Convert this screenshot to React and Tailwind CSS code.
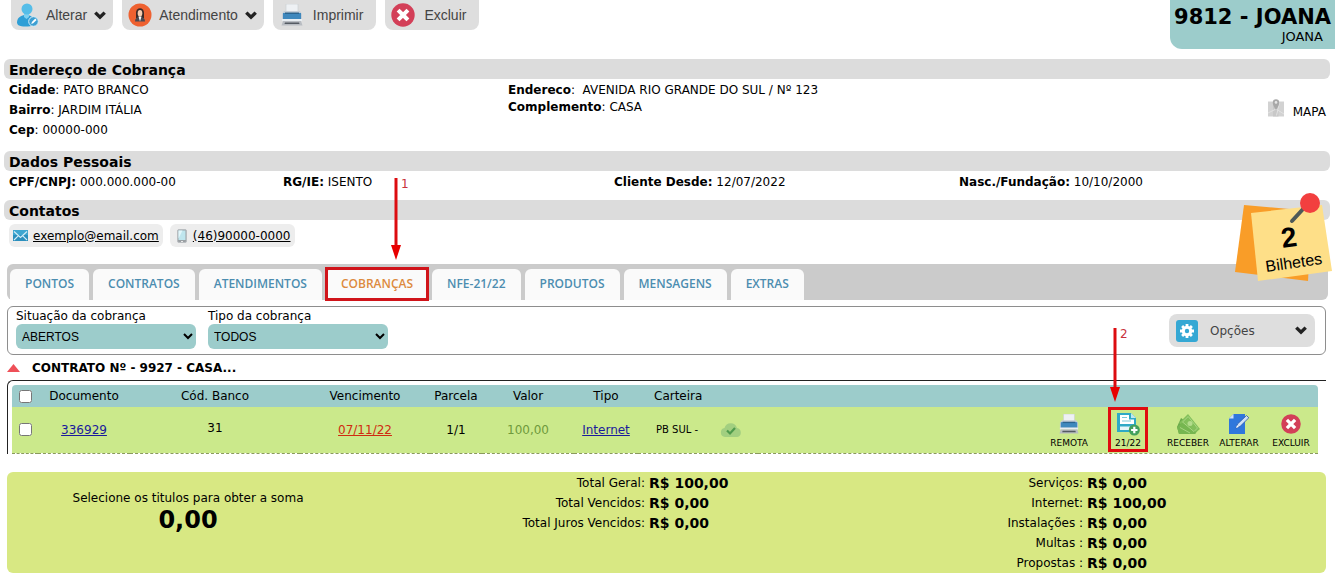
import { useState } from "react";

const tabs = ["PONTOS", "CONTRATOS", "ATENDIMENTOS", "COBRANÇAS", "NFE-21/22", "PRODUTOS", "MENSAGENS", "EXTRAS"];

const totals = [
    { label: "Total Geral:", value: "R$ 100,00" },
    { label: "Total Vencidos:", value: "R$ 0,00" },
    { label: "Total Juros Vencidos:", value: "R$ 0,00" },
];

const services = [
    { label: "Serviços:", value: "R$ 0,00" },
    { label: "Internet:", value: "R$ 100,00" },
    { label: "Instalações :", value: "R$ 0,00" },
    { label: "Multas :", value: "R$ 0,00" },
    { label: "Propostas :", value: "R$ 0,00" },
];

function Chevron() {
    return (
        <svg viewBox="0 0 12 9" className="w-3 h-[9px] shrink-0" fill="none" stroke="#222" strokeWidth="3.4">
            <path d="M1.3 1.6 6 6.2l4.700-4.600" />
        </svg>
    );
}

function UserIcon() {
    return (
        <svg viewBox="0 0 22 24" className="w-[22px] h-6 shrink-0">
            <path d="M0 20c0-5 3-7 7-8h4c4 1 7 3 7 8l-1 2c-5 2-12 2-16 0z" fill="#2f9fd6" />
            <path d="M7 10h5v4l-2.500 2L7 14z" fill="#7fd0f0" />
            <circle cx="10" cy="6" r="5.500" fill="#55bde8" />
            <circle cx="16.500" cy="18.500" r="4.800" fill="#3c9fd2" stroke="#d9eef8" strokeWidth="1" />
            <path d="m14.300 21 .6-2 3.400-3.400 1.300 1.300-3.400 3.400z" fill="#fff" />
        </svg>
    );
}

function AgentIcon() {
    return (
        <svg viewBox="0 0 24 24" className="w-6 h-6 shrink-0">
            <circle cx="12" cy="12" r="11.500" fill="#ee6130" />
            <path d="M8 15V9.500a4 4.300 0 0 1 8 0V15z" fill="#3a2a28" />
            <path d="M7 18.500c0-3 2-4 3.500-4.500h3c1.500.5 3.500 1.500 3.500 4.500z" fill="#4a4a52" />
            <ellipse cx="12" cy="10.300" rx="2.300" ry="3.200" fill="#f6cdb0" />
            <path d="m10.500 13.500 1.500 5 1.500-5z" fill="#fff" />
        </svg>
    );
}

function PrinterIcon({ className }) {
    return (
        <svg viewBox="0 0 22 22" className={className}>
            <path d="M5 0h12v9H5z" fill="#eef1f4" stroke="#c8cdd2" strokeWidth=".6" />
            <path d="M3 7h16l2 3v7H1v-7z" fill="#c5cdd6" />
            <path d="M2 9h18v6H2z" fill="#3f88bd" />
            <path d="M4 8.500h14V10H4z" fill="#2c648f" />
            <path d="M1 15h20v2H1z" fill="#e9eef2" />
            <path d="M2 17h18l1.500 4.500H.5z" fill="#b8bcc2" />
            <path d="M4 18.500h14l.5 1.500h-15z" fill="#555b63" />
        </svg>
    );
}

function DeleteIcon({ className }) {
    return (
        <svg viewBox="0 0 24 24" className={className}>
            <circle cx="12" cy="12" r="11.700" fill="#d33f58" />
            <path d="m8.500 8.500 7 7m0-7-7 7" stroke="#fff" strokeWidth="4" strokeLinecap="square" />
        </svg>
    );
}

function MapIcon() {
    return (
        <svg viewBox="0 0 18 20" className="w-[18px] h-5">
            <path d="M1 3.500h16v15H1z" fill="#d2d2d2" />
            <path d="M6 3.500h5.500v15H6z" fill="#c8c8c8" />
            <path d="m1 15 8-4 8 5M12.500 4.500l-3 13" stroke="#e2e2e2" fill="none" />
            <path d="M9 12C6.500 8 5.800 6.500 5.800 4.500a3.200 3.200 0 0 1 6.400 0C12.200 6.500 11.500 8 9 12z" fill="#a8a8a8" />
            <circle cx="9" cy="4.400" r="1.300" fill="#e6e6e6" />
        </svg>
    );
}

function MailIcon() {
    return (
        <svg viewBox="0 0 15 11" className="w-[15px] h-[11px]">
            <path d="M0 0h15v11H0z" fill="#2b8fbd" />
            <path d="M0 0h15v5H0z" fill="#3ea6d0" />
            <path d="m1 1.500 6.500 6 6.500-6M1 10l4.500-4.300M14 10 9.500 5.700" stroke="#d5eef8" strokeWidth="1.100" fill="none" />
        </svg>
    );
}

function PhoneIcon() {
    return (
        <svg viewBox="0 0 10 14" className="w-[10px] h-[14px]">
            <rect x=".5" y=".5" width="9" height="13" rx="1.500" fill="#9a9fa3" stroke="#b9bdc0" />
            <path d="M1.500 1.500h7v9.500h-7z" fill="#bfe6ee" />
            <path d="M1.500 1.500h4l-4 8z" fill="#e3f6fa" />
            <path d="M4 12h2v1H4z" fill="#e8e8e8" />
        </svg>
    );
}

function GearIcon() {
    return (
        <svg viewBox="0 0 22 22" className="w-[22px] h-[22px] shrink-0">
            <rect width="22" height="22" rx="3" fill="#35a8d4" />
            <circle cx="11" cy="11" r="3.700" fill="none" stroke="#fff" strokeWidth="3" />
            <path
                d="M11 4v3M11 15v3M4 11h3M15 11h3M6.100 6.100 8 8M14 14l1.900 1.900M15.900 6.100 14 8M8 14l-1.900 1.900"
                stroke="#fff"
                strokeWidth="2.800"
            />
        </svg>
    );
}

function CloudIcon() {
    return (
        <svg viewBox="0 0 22 16" className="w-[22px] h-4">
            <path d="M5 15a4.500 4.500 0 0 1-.5-8.900A6.500 6.500 0 0 1 17 6a4.600 4.600 0 0 1 .3 9z" fill="#a2cf80" />
            <path d="m7 8.500 3 3 5-5.500" stroke="#4f9a4c" strokeWidth="2.200" fill="none" />
        </svg>
    );
}

function InvoiceIcon() {
    return (
        <svg viewBox="0 0 24 24" className="w-6 h-6">
            <path d="M1 1h14l5 5v14H1z" fill="#2fa9c6" />
            <path d="M4 3h9v4.500h5V12H4z" fill="#fff" />
            <path d="M4 14.500h10V18H4z" fill="#e6f6f9" />
            <path d="M6 5.500h5M6 9h9" stroke="#7cc8d8" strokeWidth="1.200" />
            <path d="M15 1v5h5z" fill="#bfe8ef" />
            <circle cx="18.300" cy="18" r="5.500" fill="#43a05c" />
            <path d="M18.300 14.800v6.400M15.100 18h6.400" stroke="#fff" strokeWidth="2.200" />
        </svg>
    );
}

function MoneyIcon() {
    return (
        <svg viewBox="0 0 25 22" className="w-[25px] h-[22px]">
            <path d="M1 14 5 5l17 12-3 4H3z" fill="#69a84a" />
            <path d="m3 10 9-9 12 15-6 5z" fill="#82bf5a" />
            <path d="m1 14 6-5 13 10-1 2H3z" fill="#76b650" />
            <path d="m6.500 9 5.700-5.500L21.500 15 18 18.500z" fill="none" stroke="#a9d783" />
            <circle cx="14" cy="10.500" r="2.500" fill="#b3dc8c" />
            <path d="m4 14.500 10 5.500" stroke="#a6d480" />
        </svg>
    );
}

function EditIcon() {
    return (
        <svg viewBox="0 0 22 22" className="w-[22px] h-[22px]">
            <path d="M1 5.500 5.500 1H17v20H1z" fill="#2f77dc" />
            <path d="M1 5.500 5.500 1v4.500z" fill="#cfe2fa" />
            <path d="m8 15 1.500-4L18.500 2.500l2.300 2.300L12 13.500z" fill="#cfe0f5" stroke="#2456a8" strokeWidth=".8" />
            <path d="m8 15 1-2.700 1.700 1.600z" fill="#fff" />
        </svg>
    );
}

// Red guide arrow with its step number
function StepArrow({ step, length, className }) {
    return (
        <span className={`absolute flex items-start text-[#c8323c] font-normal text-xs leading-3 pointer-events-none ${className}`}>
            <svg viewBox={`0 0 10 ${length}`} width="10" height={length} className="shrink-0">
                <path d={`M5 0v${length - 12}`} stroke="#dc0c10" strokeWidth="3" />
                <path d={`M0 ${length - 15}h10L5 ${length}z`} fill="#e80000" />
            </svg>
            <span className="font-['DejaVu_Sans',sans-serif]">{step}</span>
        </span>
    );
}

function StickyNote() {
    return (
        <svg viewBox="0 0 98 90" className="absolute -right-[3px] -top-2 w-[98px] h-[90px] font-['Liberation_Sans',Arial,sans-serif]">
            <path d="m9 13 68 6-4 70-73-9z" fill="#f99d28" />
            <path d="m16 21 71-8 10 66-74 10z" fill="#fedf88" />
            <path d="m57 29 12-13" stroke="#4e5a58" strokeWidth="4" strokeLinecap="round" />
            <circle cx="75" cy="11" r="10" fill="#f23f3f" />
            <text x="54" y="55" textAnchor="middle" fontSize="28" fontWeight="bold" transform="rotate(-8 54 46)">2</text>
            <text x="59" y="76" textAnchor="middle" fontSize="16" transform="rotate(-8 59 72)">Bilhetes</text>
        </svg>
    );
}

function ToolButton({ icon, label, menu, className }) {
    return (
        <button className={`flex items-center h-[30px] rounded-b-lg bg-[#dedede] font-['Liberation_Sans',Arial,sans-serif] text-sm text-[#444] ${className}`}>
            {icon}
            <span>{label}</span>
            {menu && <Chevron />}
        </button>
    );
}

function SectionTitle({ children }) {
    return <h2 className="h-5 rounded-md bg-[#dcdcdc] px-[5px] text-sm leading-[22px] font-bold">{children}</h2>;
}

function Info({ label, children }) {
    return (
        <p>
            <b>{label}</b>
            {children}
        </p>
    );
}

function Action({ icon, label, className = "" }) {
    return (
        <button className={`flex flex-col items-center pt-[2px] text-[9px] leading-[14px] ${className}`}>
            <span className="flex h-6 items-center">{icon}</span>
            {label}
        </button>
    );
}

function SumTable({ rows, className }) {
    return (
        <dl className={`grid basis-0 content-start gap-x-1 leading-5 pt-px ${className}`}>
            {rows.map((r) => (
                <div key={r.label} className="contents">
                    <dt className="text-right">{r.label}</dt>
                    <dd className="text-sm leading-5 font-bold">{r.value}</dd>
                </div>
            ))}
        </dl>
    );
}

export default function App() {
    const [active, setActive] = useState("COBRANÇAS");
    const [all, setAll] = useState(false);

    return (
        <div className="bg-white text-black text-xs font-['DejaVu_Sans',Verdana,sans-serif]">
            <header className="flex items-start justify-between">
                <div className="flex gap-[9px] pl-[11px]">
                    <ToolButton icon={<UserIcon />} label="Alterar" menu className="gap-[7px] pl-[6px] pr-[7px]" />
                    <ToolButton icon={<AgentIcon />} label="Atendimento" menu className="gap-[7px] pl-[6px] pr-[7px]" />
                    <ToolButton icon={<PrinterIcon className="w-[22px] h-[22px]" />} label="Imprimir" className="gap-[10px] pl-2 pr-[13px]" />
                    <ToolButton icon={<DeleteIcon className="w-6 h-6" />} label="Excluir" className="gap-[9px] pl-[6px] pr-[13px]" />
                </div>
                <div className="h-[49px] rounded-bl-xl bg-[#9ccccb] pt-[5px] pl-1 pr-1 text-right">
                    <h1 className="text-[21px] leading-6 font-bold">9812 - JOANA</h1>
                    <p className="pr-2 text-[13px] leading-4">JOANA</p>
                </div>
            </header>

            <section className="mt-[10px] ml-1 mr-[5px]">
                <SectionTitle>Endereço de Cobrança</SectionTitle>
                <div className="flex pl-[5px] pt-px pb-[11px]">
                    <div className="w-[499px] leading-5">
                        <Info label="Cidade">: PATO BRANCO</Info>
                        <Info label="Bairro">: JARDIM ITÁLIA</Info>
                        <Info label="Cep">: 00000-000</Info>
                    </div>
                    <div className="grow pt-[2px] leading-[17px]">
                        <Info label="Endereco">: &nbsp;AVENIDA RIO GRANDE DO SUL / Nº 123</Info>
                        <Info label="Complemento">: CASA</Info>
                    </div>
                    <a href="#mapa" className="flex items-end gap-2 self-start pt-[18px] pr-1">
                        <MapIcon />
                        <span className="leading-3">MAPA</span>
                    </a>
                </div>

                <SectionTitle>Dados Pessoais</SectionTitle>
                <div className="grid grid-cols-[274fr_331fr_345fr_371fr] pl-[5px] pb-[7px] leading-[22px]">
                    <Info label="CPF/CNPJ:"> 000.000.000-00</Info>
                    <Info label="RG/IE:"> ISENTO</Info>
                    <Info label="Cliente Desde:"> 12/07/2022</Info>
                    <Info label="Nasc./Fundação:"> 10/10/2000</Info>
                </div>

                <div className="relative">
                    <SectionTitle>Contatos</SectionTitle>
                    <div className="flex gap-[7px] pt-1 pl-[5px] pb-[17px]">
                        <a href="mailto:exemplo@email.com" className="flex h-[23px] items-center gap-[5px] rounded-md bg-[#ededed] pl-1 pr-1">
                            <MailIcon />
                            <span className="underline">exemplo@email.com</span>
                        </a>
                        <a href="tel:46900000000" className="flex h-[23px] items-center gap-[6px] rounded-md bg-[#ededed] pl-[7px] pr-1">
                            <PhoneIcon />
                            <span className="underline">(46)90000-0000</span>
                        </a>
                    </div>
                    <StickyNote />
                </div>
            </section>

            <main className="ml-[7px] mr-[9px]">
                <nav className="-mr-[2px] flex gap-1 rounded-md bg-[#cbcbcb] pt-[5px] pl-[3px]">
                    {tabs.map((t) => (
                        <button
                            key={t}
                            onClick={() => setActive(t)}
                            className={`relative h-[31px] rounded-t-md bg-[#fafafa] px-[15px] pb-[2px] font-['Open_Sans',sans-serif] text-xs font-semibold ${
                                active === t ? "text-[#dd8a3e]" : "text-[#4c8db0]"
                            }`}
                        >
                            {t}
                            {t === "COBRANÇAS" && (
                                <>
                                    <span className="absolute -inset-px -top-[2px] border-3 border-[#d0141a]" />
                                    <StepArrow step="1" length={82} className="left-[65px] bottom-10" />
                                </>
                            )}
                        </button>
                    ))}
                </nav>

                <div className="mt-[6px] flex items-start gap-3 rounded-md border border-[#8e8e8e] px-2 pt-[2px] pb-[5px]">
                    <label className="flex w-[180px] flex-col leading-[15px]">
                        Situação da cobrança
                        <select className="h-[25px] rounded-md bg-[#9ccccb] pl-[2px] font-['Liberation_Sans',Arial,sans-serif] text-xs">
                            <option>ABERTOS</option>
                        </select>
                    </label>
                    <label className="flex w-[180px] flex-col leading-[15px]">
                        Tipo da cobrança
                        <select className="h-[25px] rounded-md bg-[#9ccccb] pl-[2px] font-['Liberation_Sans',Arial,sans-serif] text-xs">
                            <option>TODOS</option>
                        </select>
                    </label>
                    <button className="ml-auto mt-[5px] mr-[2px] flex h-[33px] w-[146px] items-center gap-3 rounded-lg bg-[#dedede] pl-[7px] pr-2 text-[#444]">
                        <GearIcon />
                        <span className="grow text-left">Opções</span>
                        <Chevron />
                    </button>
                </div>

                <h3 className="flex h-[25px] items-center gap-3 font-bold">
                    <svg viewBox="0 0 13 8" className="w-[13px] h-2">
                        <path d="M6.500 0 13 8H0z" fill="#ee5058" />
                    </svg>
                    CONTRATO Nº - 9927 - CASA...
                </h3>

                <div className="rounded-tl-md border-t border-l border-[#222] pt-1 pl-1 pr-2">
                    <table className="w-full table-fixed text-center">
                        <colgroup>
                            <col className="w-[26px]" />
                            <col className="w-[92px]" />
                            <col className="w-[170px]" />
                            <col className="w-[130px]" />
                            <col className="w-[52px]" />
                            <col className="w-[92px]" />
                            <col className="w-[64px]" />
                            <col className="w-[120px]" />
                            <col />
                        </colgroup>
                        <thead>
                            <tr className="h-[22px] bg-[#9ccccb]">
                                <th className="rounded-tl-sm">
                                    <input
                                        type="checkbox"
                                        aria-label="Selecionar todos"
                                        checked={all}
                                        onChange={() => setAll(!all)}
                                        className="block mx-auto size-[13px]"
                                    />
                                </th>
                                <th className="font-normal">Documento</th>
                                <th className="font-normal">Cód. Banco</th>
                                <th className="font-normal">Vencimento</th>
                                <th className="font-normal">Parcela</th>
                                <th className="font-normal">Valor</th>
                                <th className="font-normal">Tipo</th>
                                <th className="pl-4 text-left font-normal">Carteira</th>
                                <th className="rounded-tr-sm" />
                            </tr>
                        </thead>
                        <tbody>
                            <tr className="h-[46px] border-b border-dashed border-[#8a9a5c] bg-[#cbe98b]">
                                <td>
                                    <input type="checkbox" aria-label="Selecionar 336929" className="block mx-auto size-[13px]" />
                                </td>
                                <td>
                                    <a href="#336929" className="text-[#1a1a9c] underline">336929</a>
                                </td>
                                <td className="pb-1">31</td>
                                <td>
                                    <a href="#vencimento" className="text-[#d02a10] underline">07/11/22</a>
                                </td>
                                <td>1/1</td>
                                <td className="text-[#6f9a3c]">100,00</td>
                                <td>
                                    <a href="#internet" className="text-[#1a1a9c] underline">Internet</a>
                                </td>
                                <td className="pl-[18px]">
                                    <span className="flex items-center gap-[22px] text-[10px] whitespace-nowrap">
                                        PB SUL - <CloudIcon />
                                    </span>
                                </td>
                                <td className="p-0">
                                    <div className="flex h-[45px] items-center justify-end pr-px">
                                        <Action icon={<PrinterIcon className="w-5 h-5" />} label="REMOTA" className="mr-5" />
                                        <span className="relative mr-[15px] flex h-[45px] w-10 items-center">
                                            <Action icon={<InvoiceIcon />} label="21/22" className="w-full" />
                                            <span className="absolute inset-0 border-3 border-[#e00c10] pointer-events-none" />
                                            <StepArrow step="2" length={74} className="left-[2px] bottom-[50px]" />
                                        </span>
                                        <Action icon={<MoneyIcon />} label="RECEBER" className="w-[50px]" />
                                        <Action icon={<EditIcon />} label="ALTERAR" className="w-[52px]" />
                                        <Action icon={<DeleteIcon className="w-5 h-5" />} label="EXCLUIR" className="w-[52px]" />
                                    </div>
                                </td>
                            </tr>
                        </tbody>
                    </table>
                </div>

                <div className="mt-[18px] flex rounded-md bg-[#d8e883]">
                    <div className="w-[362px] pt-4 text-center">
                        <p className="leading-5">Selecione os titulos para obter a soma</p>
                        <p className="text-2xl leading-6 font-bold">0,00</p>
                    </div>
                    <SumTable rows={totals} className="grow-[518] grid-cols-[276fr_238fr]" />
                    <SumTable rows={services} className="grow-[439] grid-cols-[196fr_239fr]" />
                </div>
            </main>
        </div>
    );
}
